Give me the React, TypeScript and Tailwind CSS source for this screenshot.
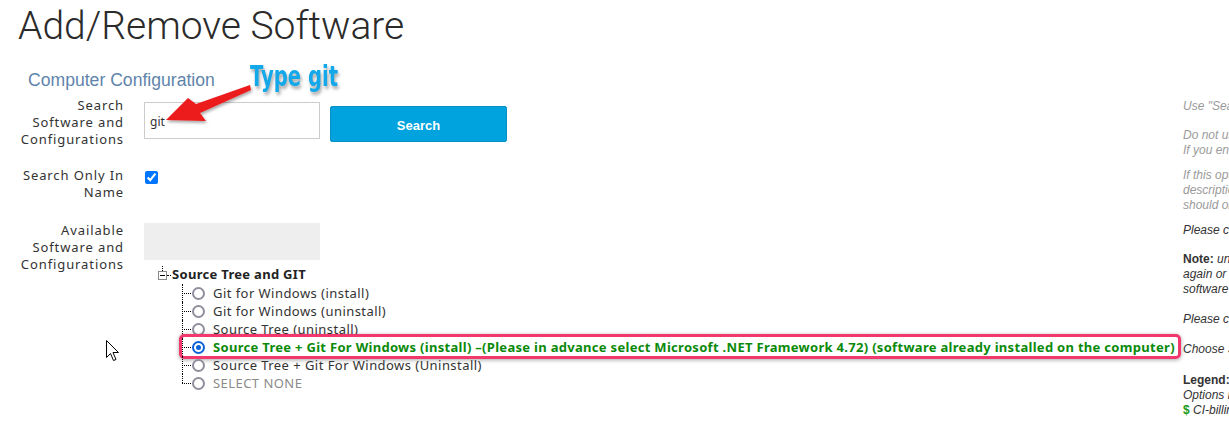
import React from 'react';

const labelFont = { fontFamily: '"Noto Sans", Arial, sans-serif' };

interface TreeItem {
  label: string;
  tone: 'normal' | 'selected' | 'muted';
}

const items: TreeItem[] = [
  { label: 'Git for Windows (install)', tone: 'normal' },
  { label: 'Git for Windows (uninstall)', tone: 'normal' },
  { label: 'Source Tree (uninstall)', tone: 'normal' },
  {
    label:
      'Source Tree + Git For Windows (install) \u2013(Please in advance select Microsoft .NET Framework 4.72) (software already installed on the computer)',
    tone: 'selected',
  },
  { label: 'Source Tree + Git For Windows (Uninstall)', tone: 'normal' },
  { label: 'SELECT NONE', tone: 'muted' },
];

const Radio: React.FC<{ checked: boolean }> = ({ checked }) => (
  <span
    className={`flex h-[13px] w-[13px] shrink-0 items-center justify-center rounded-full border-2 bg-white ${
      checked ? 'border-[#0b62d8]' : 'border-[#8f8f9d]'
    }`}
  >
    {checked && <span className="h-[5px] w-[5px] rounded-full bg-[#0b62d8]" />}
  </span>
);

const TreeRow: React.FC<{ item: TreeItem; last: boolean }> = ({ item, last }) => {
  const selected = item.tone === 'selected';
  return (
    <div className="relative flex h-[18px] items-center">
      {/* dotted connectors */}
      <div className="relative h-full w-[10px] shrink-0">
        <div
          className={`absolute left-0 top-0 border-l border-dotted border-black ${last ? 'h-[9px]' : 'h-full'}`}
        />
        <div className="absolute left-0 top-[9px] w-[9px] border-t border-dotted border-black" />
      </div>
      <div className="relative flex items-center">
        {selected && (
          <div className="pointer-events-none absolute -left-[13px] -right-[6px] -top-[4px] -bottom-[3px] rounded-[5px] border-[3px] border-[#f2386c] shadow-[0_1px_4px_rgba(0,0,0,0.35)]" />
        )}
        <Radio checked={selected} />
        <span
          className={`ml-[8px] whitespace-nowrap text-[13px] leading-[18px] ${
            selected
              ? 'font-bold tracking-[0.3px] text-[#0a8a0a]'
              : item.tone === 'muted'
                ? 'tracking-[0.45px] text-[#8a8a8a]'
                : 'tracking-[0.45px] text-[#333]'
          }`}
          style={labelFont}
        >
          {item.label}
        </span>
      </div>
    </div>
  );
};

const FormLabel: React.FC<{ lines: string[] }> = ({ lines }) => (
  <div
    className="w-[106px] shrink-0 text-right text-[13px] leading-[17px] tracking-[0.9px] text-[#333]"
    style={labelFont}
  >
    {lines.map((l) => (
      <div key={l} className="whitespace-nowrap">
        {l}
      </div>
    ))}
  </div>
);

const HelpLine: React.FC<{ children: React.ReactNode; className?: string }> = ({ children, className }) => (
  <div className={`whitespace-nowrap ${className ?? ''}`}>{children}</div>
);

export default function App() {
  return (
    <div className="relative h-[426px] w-[1229px] overflow-hidden bg-white">
      <div className="flex">
        {/* Main column */}
        <div className="w-[1183px] shrink-0">
          <h1
            className="pl-[18px] pt-[2px] text-[39px] font-light leading-[48px] text-[#2b2b2b]"
            style={{ fontFamily: 'Roboto, "Noto Sans", sans-serif' }}
          >
            Add/Remove Software
          </h1>

          <h2
            className="mt-[19px] pl-[28px] text-[17.6px] leading-[22px] text-[#5f84ab]"
            style={{ fontFamily: '"Liberation Sans", Arial, sans-serif' }}
          >
            Computer Configuration
          </h2>

          {/* Search row */}
          <div className="mt-[6px] flex pl-[18px]">
            <FormLabel lines={['Search', 'Software and', 'Configurations']} />
            <div
              className="ml-[20px] mt-[5px] flex h-[37px] w-[176px] items-center border border-[#cccccc] px-[5px] pt-[2px] text-[12px] text-[#333]"
              style={labelFont}
            >
              git
            </div>
            <button
              className="ml-[10px] mt-[9px] h-[36px] w-[177px] rounded-[2px] border border-[#0a8fc4] bg-[#00a3dd] pt-[3px] text-[13px] font-bold text-white"
              style={{ fontFamily: '"Liberation Sans", Arial, sans-serif' }}
            >
              Search
            </button>
          </div>

          {/* Search only in name */}
          <div className="mt-[19px] flex pl-[18px]">
            <FormLabel lines={['Search Only In', 'Name']} />
            <input type="checkbox" defaultChecked className="ml-[21px] mt-[4px] h-[13px] w-[13px]" />
          </div>

          {/* Available software */}
          <div className="mt-[21px] flex pl-[18px]">
            <FormLabel lines={['Available', 'Software and', 'Configurations']} />
            <div className="ml-[20px] mt-[1px] h-[37px] w-[176px] bg-[#eeeeee]" />
          </div>

          {/* Tree */}
          <div className="-mt-[7px] pl-[158px]">
            <div className="flex h-[18px] items-center">
              <div className="relative h-[9px] w-[9px] border border-[#888] bg-white">
                <div className="absolute left-[1px] right-[1px] top-[3px] h-px bg-black" />
                <div className="absolute -top-[6px] left-[3px] h-[5px] border-l border-dotted border-black" />
              </div>
              <div className="w-[4px] border-t border-dotted border-black" />
              <span className="ml-[1px] text-[13px] font-bold tracking-[0.3px] text-[#222]" style={labelFont}>
                Source Tree and GIT
              </span>
            </div>
            <div className="pl-[24px]">
              {items.map((it, i) => (
                <TreeRow key={it.label} item={it} last={i === items.length - 1} />
              ))}
            </div>
          </div>
        </div>

        {/* Help column, clipped by the window */}
        <div
          className="w-[300px] shrink-0 pt-[99px] text-[12px] italic leading-[15px] text-[#333]"
          style={{ fontFamily: '"Liberation Sans", Arial, sans-serif' }}
        >
          <div className="text-[#9a9a9a]">
            <HelpLine>Use "Search" to find software and configurations.</HelpLine>
            <HelpLine className="mt-[14px]">Do not use wildcards.</HelpLine>
            <HelpLine>If you enter several words, all of them must match.</HelpLine>
            <HelpLine className="mt-[10px]">If this option is selected, only the name and not the</HelpLine>
            <HelpLine>description of the software is searched. You</HelpLine>
            <HelpLine>should only clear it when nothing is found.</HelpLine>
          </div>
          <HelpLine className="mt-[10px]">Please choose the software you need.</HelpLine>
          <HelpLine className="mt-[14px]">
            <span className="font-bold not-italic">Note:</span> uninstall options remove the software
          </HelpLine>
          <HelpLine>again or update configurations of installed</HelpLine>
          <HelpLine>software on your computer.</HelpLine>
          <HelpLine className="mt-[15px]">Please check the hints next to each option.</HelpLine>
          <HelpLine className="mt-[15px]">Choose SELECT NONE to reset your selection.</HelpLine>
          <HelpLine className="mt-[16px] font-bold not-italic">Legend:</HelpLine>
          <HelpLine>Options in green are already installed.</HelpLine>
          <HelpLine>
            <span className="font-bold not-italic text-[#1a9a1a]">$</span> CI-billing applies, additional costs will be charged
          </HelpLine>
        </div>
      </div>

      {/* Annotation: "Type git" with red arrow */}
      <div
        className="pointer-events-none absolute left-[250px] top-[60px] origin-left scale-x-[0.7] text-[28px] font-bold leading-[34px] text-[#12a8ea] [text-shadow:2px_3px_4px_rgba(0,0,0,0.35)]"
        style={{ fontFamily: '"DejaVu Sans", sans-serif' }}
      >
        Type git
      </div>
      <svg className="pointer-events-none absolute left-0 top-0" width="1229" height="426">
        <defs>
          <filter id="sh" x="-20%" y="-20%" width="140%" height="140%">
            <feDropShadow dx="1" dy="2" stdDeviation="1.5" floodOpacity="0.35" />
          </filter>
        </defs>
        <polygon
          points="250,85 196,104 188,98 166,120 206,121 200,113 251,90"
          fill="#ec1b1b"
          filter="url(#sh)"
        />
        {/* mouse pointer */}
        <path
          d="M106.5 340.5 L106.5 357.5 L110.5 353.5 L113.5 360.5 L116 359.5 L113 352.5 L118.5 352.5 Z"
          fill="white"
          stroke="black"
          strokeWidth="1"
          strokeLinejoin="miter"
        />
      </svg>
    </div>
  );
}
